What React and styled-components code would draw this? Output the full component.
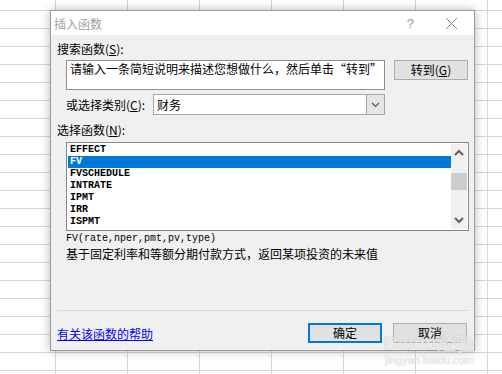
import React from 'react';
import styled, { createGlobalStyle } from 'styled-components';

const functions = ['EFFECT', 'FV', 'FVSCHEDULE', 'INTRATE', 'IPMT', 'IRR', 'ISPMT'];

const Global = createGlobalStyle`
  body {
    margin: 0;
    font-family: "Noto Sans CJK SC", "Liberation Sans", sans-serif;
  }
`;

export default function App() {
  return (
    <Sheet>
      <Global />
      <Dialog>
        <TitleBar>
          <Title>插入函数</Title>
          <TitleButtons>
            <Help>?</Help>
            <CloseIcon width="13" height="13" viewBox="0 0 13 13">
              <path d="M1 1 L12 12 M12 1 L1 12" stroke="#8a8a8a" strokeWidth="1" fill="none" />
            </CloseIcon>
          </TitleButtons>
        </TitleBar>
        <Body>
          <Label>
            搜索函数(<u>S</u>):
          </Label>
          <SearchRow>
            <SearchBox>请输入一条简短说明来描述您想做什么，然后单击“转到”</SearchBox>
            <Button>
              转到(<u>G</u>)
            </Button>
          </SearchRow>
          <CategoryRow>
            <CategoryLabel>
              或选择类别(<u>C</u>):
            </CategoryLabel>
            <Select>
              <SelectValue>财务</SelectValue>
              <SelectArrow>
                <svg width="9" height="6" viewBox="0 0 9 6">
                  <path d="M1 1 L4.5 4.5 L8 1" stroke="#555" strokeWidth="1.2" fill="none" />
                </svg>
              </SelectArrow>
            </Select>
          </CategoryRow>
          <FuncLabel>
            选择函数(<u>N</u>):
          </FuncLabel>
          <ListBox>
            <Rows>
              {functions.map((name) => (
                <Row key={name} selected={name === 'FV'}>
                  {name}
                </Row>
              ))}
            </Rows>
            <ScrollBar>
              <svg width="10" height="7" viewBox="0 0 10 7">
                <path d="M1 6 L5 2 L9 6" stroke="#606060" strokeWidth="2" fill="none" />
              </svg>
              <Track>
                <Thumb />
              </Track>
              <svg width="10" height="7" viewBox="0 0 10 7">
                <path d="M1 1 L5 5 L9 1" stroke="#606060" strokeWidth="2" fill="none" />
              </svg>
            </ScrollBar>
          </ListBox>
          <Signature>FV(rate,nper,pmt,pv,type)</Signature>
          <Description>基于固定利率和等额分期付款方式，返回某项投资的未来值</Description>
          <Footer>
            <HelpLink href="#">有关该函数的帮助</HelpLink>
            <Buttons>
              <Button primary>确定</Button>
              <Button>取消</Button>
            </Buttons>
          </Footer>
        </Body>
      </Dialog>
      <Watermark>
        <Brand>Baidu经验</Brand>
        <Domain>jingyan.baidu.com</Domain>
      </Watermark>
    </Sheet>
  );
}

const Sheet = styled.div`
  position: relative;
  width: 502px;
  height: 374px;
  overflow: hidden;
  box-sizing: border-box;
  padding: 10px 0 0 50px;
  background-color: #fff;
  background-image: linear-gradient(to right, #d0d7e5 1px, transparent 1px),
    linear-gradient(to bottom, #d0d7e5 1px, transparent 1px);
  background-size: 72px 18px;
  background-position: 55px 10px;
`;

const Dialog = styled.div`
  width: 425px;
  height: 341px;
  box-sizing: border-box;
  display: flex;
  flex-direction: column;
  background: #f0f0f0;
  border: 1px solid #9a9a9a;
  box-shadow: 0 0 10px rgba(0, 0, 0, 0.28);
`;

const TitleBar = styled.div`
  height: 24px;
  display: flex;
  align-items: center;
  justify-content: space-between;
  background: #fff;
  padding: 0 16px 0 3px;
`;

const Title = styled.span`
  font-size: 12px;
  color: #a0a0a0;
`;

const TitleButtons = styled.div`
  display: flex;
  align-items: center;
  gap: 31px;
`;

const Help = styled.span`
  font-family: "Liberation Sans", sans-serif;
  font-size: 13px;
  color: #9a9a9a;
`;

const CloseIcon = styled.svg`
  display: block;
`;

const Body = styled.div`
  flex: 1;
  display: flex;
  flex-direction: column;
  padding: 7px 6px 7px 6px;
  font-size: 12px;
  color: #000;
`;

const Label = styled.div`
  height: 14px;
  line-height: 14px;
  margin-bottom: 4px;
`;

const SearchRow = styled.div`
  display: flex;
  align-items: flex-start;
  gap: 9px;
  padding-left: 9px;
`;

const SearchBox = styled.div`
  width: 319px;
  height: 30px;
  box-sizing: border-box;
  border: 1px solid #8f8f8f;
  background: #fff;
  padding: 1px 0 0 3px;
  line-height: 14px;
  white-space: nowrap;
  overflow: hidden;
`;

const Button = styled.button`
  width: 74px;
  height: 20px;
  box-sizing: border-box;
  padding: 0;
  font-family: inherit;
  font-size: 12px;
  color: #000;
  background: #e1e1e1;
  border: ${(p) => (p.primary ? '2px solid #0078d7' : '1px solid #adadad')};
  line-height: 14px;
`;

const CategoryRow = styled.div`
  display: flex;
  align-items: center;
  margin-top: 4px;
  padding-left: 9px;
`;

const CategoryLabel = styled.span`
  width: 87px;
`;

const Select = styled.div`
  width: 232px;
  height: 21px;
  box-sizing: border-box;
  display: flex;
  border: 1px solid #a6a6a6;
  background: #fff;
`;

const SelectValue = styled.span`
  flex: 1;
  padding-left: 3px;
  line-height: 19px;
`;

const SelectArrow = styled.span`
  width: 17px;
  display: flex;
  align-items: center;
  justify-content: center;
  background: #e5e5e5;
  border-left: 1px solid #a6a6a6;
`;

const FuncLabel = styled.div`
  height: 14px;
  line-height: 14px;
  margin-top: 8px;
`;

const ListBox = styled.div`
  width: 403px;
  height: 89px;
  box-sizing: border-box;
  margin: 5px 0 0 9px;
  display: flex;
  border: 1px solid #828790;
  background: #fff;
`;

const Rows = styled.div`
  flex: 1;
  padding: 1px 0 0 1px;
`;

const Row = styled.div`
  height: 12px;
  line-height: 12px;
  padding-left: 2px;
  font-family: "Liberation Mono", monospace;
  font-size: 10px;
  font-weight: bold;
  color: ${(p) => (p.selected ? '#fff' : '#000')};
  background: ${(p) => (p.selected ? '#0078d7' : 'transparent')};
`;

const ScrollBar = styled.div`
  width: 16px;
  margin: 1px 1px 1px 0;
  display: flex;
  flex-direction: column;
  align-items: center;
  justify-content: space-between;
  padding: 5px 0;
  box-sizing: border-box;
  background: #f0f0f0;
`;

const Track = styled.div`
  flex: 1;
  width: 100%;
  padding-top: 17px;
`;

const Thumb = styled.div`
  height: 17px;
  background: #cdcdcd;
`;

const Signature = styled.div`
  margin-top: 1px;
  height: 14px;
  line-height: 14px;
  padding-left: 9px;
  font-family: "Liberation Mono", monospace;
  font-size: 10px;
`;

const Description = styled.div`
  line-height: 16px;
  padding-left: 9px;
  font-size: 12px;
`;

const Footer = styled.div`
  margin-top: auto;
  display: flex;
  align-items: center;
  justify-content: space-between;
  border-top: 1px solid #d9d9d9;
  padding-top: 12px;
`;

const HelpLink = styled.a`
  color: #0000ff;
  text-decoration: underline;
  font-size: 12px;
`;

const Buttons = styled.div`
  display: flex;
  gap: 11px;
  padding-right: 1px;
`;

const Watermark = styled.div`
  position: absolute;
  left: 384px;
  top: 334px;
  display: flex;
  flex-direction: column;
  align-items: center;
  color: rgba(255, 255, 255, 0.7);
  text-shadow: 0 0 1px rgba(120, 120, 120, 0.5);
  pointer-events: none;
`;

const Brand = styled.span`
  font-family: "Liberation Sans", sans-serif;
  font-weight: bold;
  font-size: 19px;
  line-height: 20px;
`;

const Domain = styled.span`
  font-family: "Liberation Sans", sans-serif;
  font-size: 11px;
  line-height: 12px;
`;
